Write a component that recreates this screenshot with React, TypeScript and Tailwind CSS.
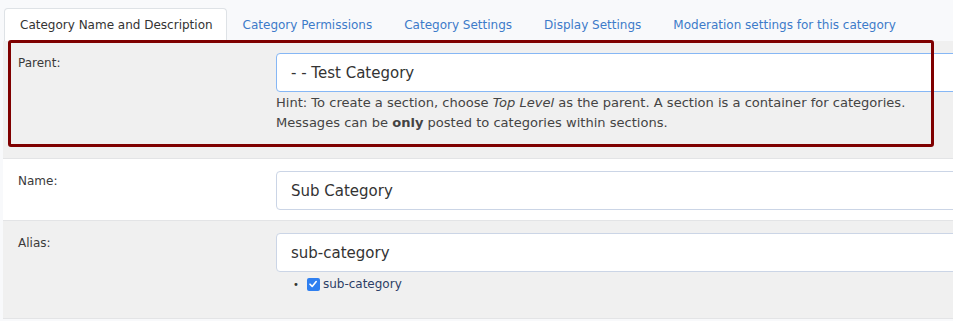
import React from "react";

const font = "font-['DejaVu_Sans',_'Liberation_Sans',_sans-serif]";

function Row({
  label,
  bg,
  h,
  children,
}: {
  label: string;
  bg: string;
  h: string;
  children: React.ReactNode;
}) {
  return (
    <div className={`flex border-b border-[#e3e4e6] ${bg} ${h}`}>
      <div className="w-[273px] shrink-0 pl-[15px] pt-[13px] text-[12px] leading-[18px] text-[#3a3a3a]">
        {label}
      </div>
      <div className="flex-1 pt-[12px] min-w-0">{children}</div>
    </div>
  );
}

function Input({ value, focused }: { value: string; focused?: boolean }) {
  return (
    <div
      className={`h-[39px] w-[720px] rounded-[4px] bg-white border flex items-center pl-[14px] pt-[1px] text-[15px] text-[#333] ${
        focused ? "border-[#86b7f5]" : "border-[#cbd5e6]"
      }`}
    >
      {value}
    </div>
  );
}

export default function App() {
  const tabs = [
    "Category Permissions",
    "Category Settings",
    "Display Settings",
    "Moderation settings for this category",
  ];
  return (
    <div className={`relative w-[953px] h-[321px] overflow-hidden bg-[#f8f9fb] ${font}`}>
      <div className="flex pl-[4px] pt-[8px] h-[41px] whitespace-nowrap">
        <div className="shrink-0 flex items-center pl-[15px] pr-[13px] bg-white border border-b-0 border-[#dee2e6] rounded-t-[4px] text-[12px] text-[#333]">
          Category Name and Description
        </div>
        {tabs.map((t) => (
          <div key={t} className="shrink-0 flex items-center px-[16px] text-[12px] text-[#3d7bc9]">
            {t}
          </div>
        ))}
      </div>
      <div className="ml-[3px]">
        <Row label="Parent:" bg="bg-[#f0f0f0]" h="h-[118px]">
          <Input value="- - Test Category" focused />
          <div className="text-[13.05px] leading-[20px] text-[#444] pt-[1px]">
            Hint: To create a section, choose <i>Top Level</i> as the parent. A section is a
            container for categories.
            <br />
            Messages can be <b>only</b> posted to categories within sections.
          </div>
        </Row>
        <Row label="Name:" bg="bg-white" h="h-[62px]">
          <Input value="Sub Category" />
        </Row>
        <Row label="Alias:" bg="bg-[#f0f0f0]" h="h-[98px]">
          <Input value="sub-category" />
          <div className="flex items-center h-[22px] pt-[2px] pl-[17px] text-[12px] text-[#2c3e66]">
            <span className="text-[#333] text-[10px] mr-[8px]">•</span>
            <span className="w-[13px] h-[13px] rounded-[2px] bg-[#2f7ff0] flex items-center justify-center mr-[3px]">
              <svg width="10" height="10" viewBox="0 0 10 10">
                <path d="M2 5.2 L4.2 7.4 L8.2 2.6" stroke="white" strokeWidth="1.6" fill="none" strokeLinecap="round" strokeLinejoin="round" />
              </svg>
            </span>
            sub-category
          </div>
        </Row>
      </div>
      <div className="absolute left-[8px] top-[40px] w-[926px] h-[107px] border-[3px] border-[#7f0000] rounded-[3px]" />
    </div>
  );
}
